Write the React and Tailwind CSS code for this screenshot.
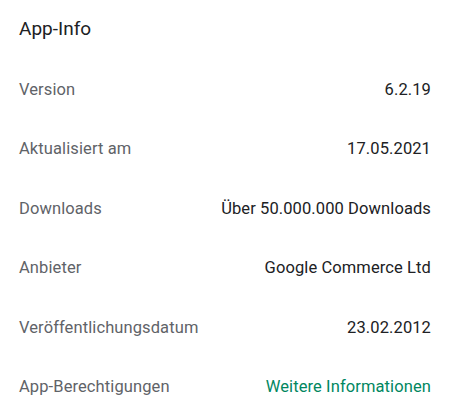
import React from 'react';

const rows = [
  { label: 'Version', value: '6.2.19' },
  { label: 'Aktualisiert am', value: '17.05.2021' },
  { label: 'Downloads', value: 'Über 50.000.000 Downloads' },
  { label: 'Anbieter', value: 'Google Commerce Ltd' },
  { label: 'Veröffentlichungsdatum', value: '23.02.2012' },
  { label: 'App-Berechtigungen', value: 'Weitere Informationen', link: true },
];

export default function App() {
  return (
    <div
      className="w-[450px] h-[417px] bg-white px-[19px] overflow-hidden"
      style={{ fontFamily: 'Roboto, "Noto Sans", sans-serif' }}
    >
      <div className="h-[56px] mb-[4px] flex items-center">
        <h2 className="text-[19px] text-[#202124] leading-none">App-Info</h2>
      </div>
      {rows.map((r) => (
        <div
          key={r.label}
          className="h-[59.5px] flex items-center justify-between text-[16.5px] tracking-[0.1px] leading-none"
        >
          <span className="text-[#5f6368]">{r.label}</span>
          <span className={r.link ? 'text-[#01875f]' : 'text-[#202124]'}>{r.value}</span>
        </div>
      ))}
    </div>
  );
}
